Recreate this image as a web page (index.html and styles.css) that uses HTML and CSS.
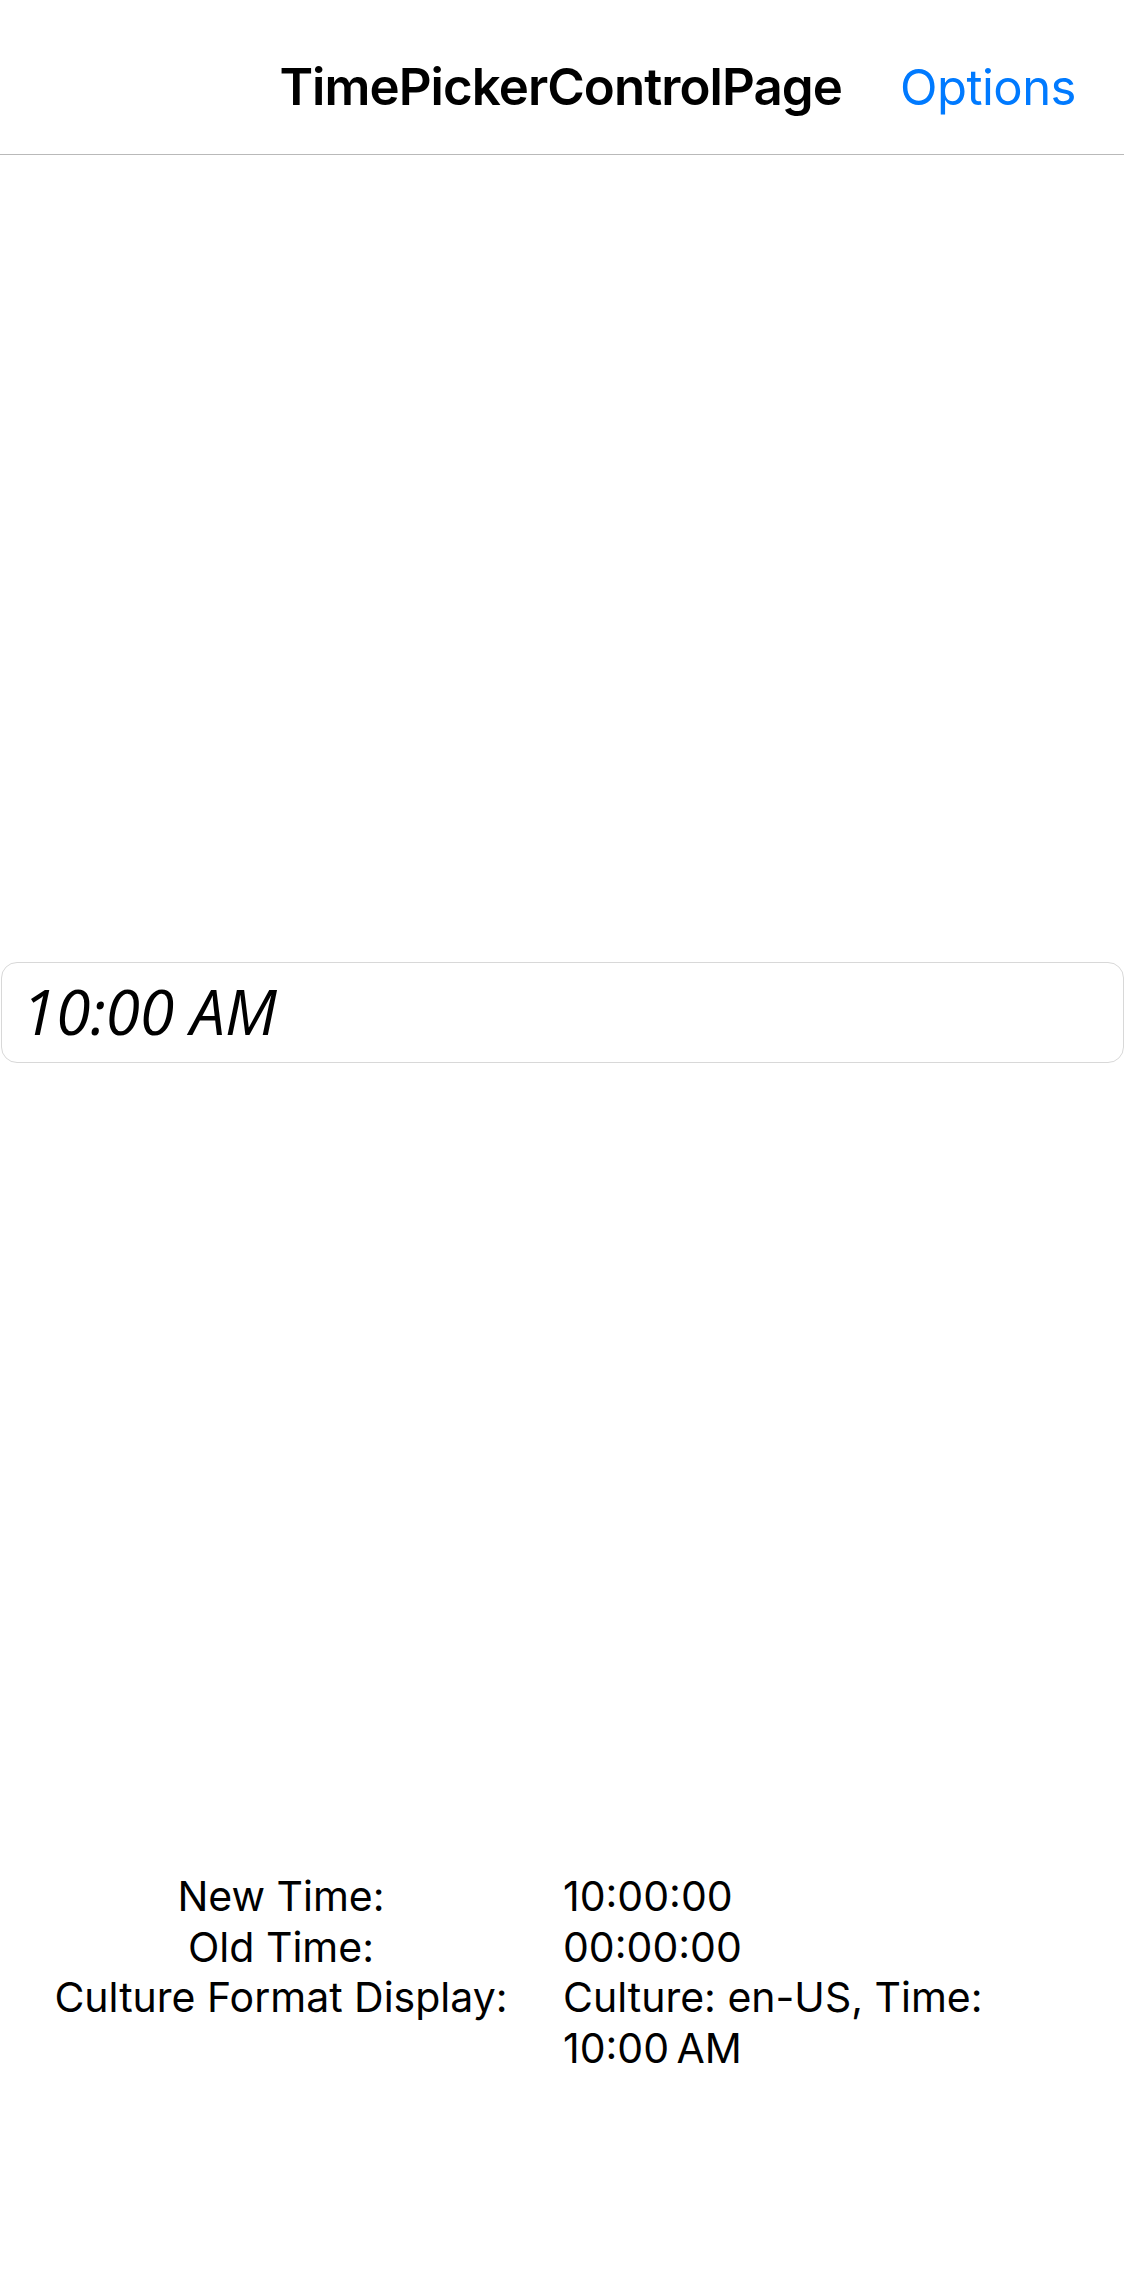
FILE: index.html
```html
<!DOCTYPE html>
<html lang="en">
<head>
<meta charset="utf-8">
<title>TimePickerControlPage</title>
<link rel="stylesheet" href="styles.css">
</head>
<body>
<div class="page">
  <header class="navbar">
    <span class="nav-title">TimePickerControlPage</span>
    <span class="nav-action">Options</span>
  </header>
  <main class="content">
    <div class="picker-area">
      <div class="time-entry">10:00 AM</div>
    </div>
    <div class="info-grid">
      <div class="info-label">New Time:</div>
      <div class="info-value">10:00:00</div>
      <div class="info-label">Old Time:</div>
      <div class="info-value">00:00:00</div>
      <div class="info-label">Culture Format Display:</div>
      <div class="info-value">Culture: en-US, Time:<br>10:00&#8239;AM</div>
    </div>
  </main>
</div>
</body>
</html>
```
FILE: styles.css
```css
html, body {
  margin: 0;
  padding: 0;
  background: #ffffff;
}
body {
  font-family: Inter, "Noto Sans", "Liberation Sans", sans-serif;
  color: #000;
}
.page {
  width: 1124px;
  height: 2286px;
  display: flex;
  flex-direction: column;
}
.navbar {
  height: 155px;
  border-bottom: 1px solid #b9b9b9;
  display: flex;
  justify-content: flex-end;
  align-items: baseline;
  padding: 57px 48px 0 0;
  box-sizing: border-box;
  gap: 58px;
  line-height: 60px;
}
.nav-title {
  font-size: 51px;
  font-weight: 600;
  letter-spacing: -0.95px;
}
.nav-action {
  font-size: 49px;
  letter-spacing: -0.5px;
  color: #007aff;
}
.content {
  flex: 1;
  display: flex;
  flex-direction: column;
}
.picker-area {
  padding-top: 807px;
  padding-left: 1px;
}
.time-entry {
  height: 99px;
  border: 1px solid #d8d8d8;
  border-radius: 16px;
  box-sizing: content-box;
  font-family: "Open Sans", sans-serif;
  font-style: italic;
  font-size: 62px;
  line-height: 97px;
  padding-left: 20px;
}
.info-grid {
  margin-top: 808px;
  display: grid;
  grid-template-columns: 562px 1fr;
  font-size: 41px;
  line-height: 50.5px;
}
.info-label {
  text-align: center;
}
.info-value {
  padding-left: 1px;
}
```
